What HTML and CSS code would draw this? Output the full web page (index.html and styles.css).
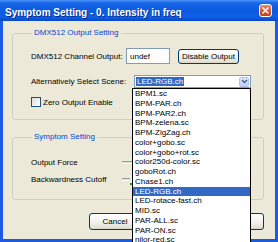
FILE: index.html
```html
<!DOCTYPE html>
<html lang="en">
<head>
  <meta charset="UTF-8" />
  <title>Symptom Setting</title>
  <link rel="stylesheet" href="styles.css">
</head>
<body>

  <div class="window">
    <div class="titlebar">
      <span class="title">Symptom Setting - 0. Intensity in freq</span>
      <span class="close">
        <svg width="7" height="7" viewBox="0 0 7 7"><path d="M1 1L6 6M6 1L1 6" stroke="#fff" stroke-width="1.6" stroke-linecap="round"/></svg>
      </span>
    </div>

    <div class="dialog">
      <fieldset class="group group-output">
        <legend>DMX512 Output Setting</legend>
        <div class="row row-channel">
          <span class="label label-channel">DMX512 Channel Output:</span>
          <input type="text" class="text-input" value="undef">
          <button class="btn btn-disable">Disable Output</button>
        </div>
        <div class="row row-scene">
          <span class="label label-scene">Alternatively Select Scene:</span>
          <div class="combo">
            <span class="combo-value">LED-RGB.ch</span>
            <span class="combo-arrow">
              <svg width="7" height="5" viewBox="0 0 7 5"><path d="M1 1L3.5 3.5L6 1" fill="none" stroke="#4d6185" stroke-width="1.5"/></svg>
            </span>
          </div>
        </div>
        <div class="row row-zero">
          <span class="checkbox"></span>
          <span class="label">Zero Output Enable</span>
        </div>
      </fieldset>

      <fieldset class="group group-symptom">
        <legend>Symptom Setting</legend>
        <div class="row row-slider">
          <span class="label label-slider">Output Force</span>
          <span class="track"></span>
        </div>
        <div class="row row-slider">
          <span class="label label-slider">Backwardness Cutoff</span>
          <span class="track"><span class="thumb"></span></span>
        </div>
      </fieldset>

      <div class="buttons">
        <button class="btn btn-cancel">Cancel</button>
        <button class="btn btn-ok"></button>
      </div>
    </div>

    <ul class="droplist">
      <li>BPM1.sc</li>
      <li>BPM-PAR.ch</li>
      <li>BPM-PAR2.ch</li>
      <li>BPM-zelena.sc</li>
      <li>BPM-ZigZag.ch</li>
      <li>color+gobo.sc</li>
      <li>color+gobo+rot.sc</li>
      <li>color250d-color.sc</li>
      <li>goboRot.ch</li>
      <li>Chase1.ch</li>
      <li class="selected">LED-RGB.ch</li>
      <li>LED-rotace-fast.ch</li>
      <li>MID.sc</li>
      <li>PAR-ALL.sc</li>
      <li>PAR-ON.sc</li>
      <li>nilor-red.sc</li>
    </ul>
  </div>

</body>
</html>
```

FILE: styles.css
```css
body {
  margin: 0;
  font-family: "Liberation Sans", Arial, sans-serif;
  font-size: 8px;
  color: #000;
  overflow: hidden;
}

.window {
  position: relative;
  width: 278px;
  height: 242px;
  display: flex;
  flex-direction: column;
  background: #1c5ae6;
  overflow: hidden;
}

.titlebar {
  height: 21px;
  box-sizing: border-box;
  padding: 4px 6px 0 5px;
  display: flex;
  justify-content: space-between;
  align-items: flex-start;
  background: linear-gradient(to bottom, #4a92f7 0%, #1766e8 14%, #0b5ae0 50%, #0d5fe8 82%, #0846c4 100%);
}

.title {
  color: #fff;
  font-weight: bold;
  font-size: 10px;
  line-height: 17px;
  text-shadow: 1px 1px 0 #0a2a80;
}

.close {
  width: 13px;
  height: 13px;
  box-sizing: border-box;
  border: 1px solid #fff;
  border-radius: 3px;
  background: linear-gradient(to bottom, #ea8c6c, #d1502c 60%, #c23d1c);
  display: flex;
  align-items: center;
  justify-content: center;
}

.dialog {
  flex: 1;
  margin: 0 3px 3px 3px;
  background: #ece9d8;
  padding: 7px 11px 0 9px;
  display: flex;
  flex-direction: column;
}

.group {
  margin: 0;
  border: 1px solid #d0d0bf;
  border-radius: 3px;
  padding: 10px 0 11px 18px;
  display: flex;
  flex-direction: column;
}

.group legend {
  color: #0046d5;
  padding: 0 2px;
  margin-left: 1px;
  line-height: 10px;
}

.group-symptom {
  margin-top: 12px;
  padding-top: 12px;
}

.row {
  display: flex;
  align-items: center;
}

.label {
  white-space: nowrap;
}

.row-channel {
  height: 16px;
}

.label-channel {
  width: 95px;
}

.text-input {
  width: 44px;
  height: 16px;
  box-sizing: border-box;
  border: 1px solid #7f9db9;
  padding: 0 3px;
  margin: 0;
  font: inherit;
  background: #fff;
}

.btn {
  box-sizing: border-box;
  border: 1px solid #003c74;
  border-radius: 3px;
  background: linear-gradient(to bottom, #ffffff 0%, #f4f3ee 50%, #e3e1d6 90%, #d6d0c5 100%);
  font: inherit;
  padding: 0;
  color: #000;
}

.btn-disable {
  width: 61px;
  height: 15px;
  margin-left: 8px;
}

.row-scene {
  height: 13px;
  margin-top: 11px;
}

.label-scene {
  width: 103px;
}

.combo {
  width: 117px;
  height: 13px;
  box-sizing: border-box;
  border: 1px solid #7f9db9;
  background: #fff;
  display: flex;
  align-items: center;
  justify-content: space-between;
  padding: 0 1px 0 1px;
}

.combo-value {
  background: #316ac5;
  color: #fff;
  line-height: 9px;
  padding: 0 1px;
}

.combo-arrow {
  width: 10px;
  height: 10px;
  box-sizing: border-box;
  border: 1px solid #b1c4ef;
  border-radius: 2px;
  background: linear-gradient(to bottom, #dce6fd, #bccff8);
  display: flex;
  align-items: center;
  justify-content: center;
}

.row-zero {
  height: 12px;
  margin-top: 8px;
}

.checkbox {
  width: 10px;
  height: 10px;
  box-sizing: border-box;
  border: 1px solid #1c5180;
  background: linear-gradient(135deg, #dcdcd6, #ffffff);
  margin-right: 2px;
}

.row-slider {
  height: 17px;
}

.label-slider {
  width: 91px;
}

.track {
  position: relative;
  width: 60px;
  height: 3px;
  box-sizing: border-box;
  border-top: 1px solid #9d9d9a;
  border-bottom: 1px solid #fff;
  background: #e0ddd0;
}

.thumb {
  position: absolute;
  left: 8px;
  top: -5px;
  width: 3px;
  height: 9px;
  background: #e9f0e4;
  border-bottom: 2px solid #21a121;
}

.buttons {
  display: flex;
  gap: 48px;
  margin: 13px 0 0 77px;
}

.btn-cancel {
  width: 52px;
  height: 17px;
}

.btn-ok {
  width: 75px;
  height: 17px;
}

.droplist {
  position: absolute;
  left: 132px;
  top: 88px;
  width: 119px;
  margin: 0;
  padding: 0;
  list-style: none;
  box-sizing: border-box;
  border: 1px solid #000;
  background: #fff;
}

.droplist li {
  height: 9.75px;
  line-height: 9.75px;
  padding-left: 2px;
  white-space: nowrap;
}

.droplist li.selected {
  background: #316ac5;
  color: #fff;
}
```
